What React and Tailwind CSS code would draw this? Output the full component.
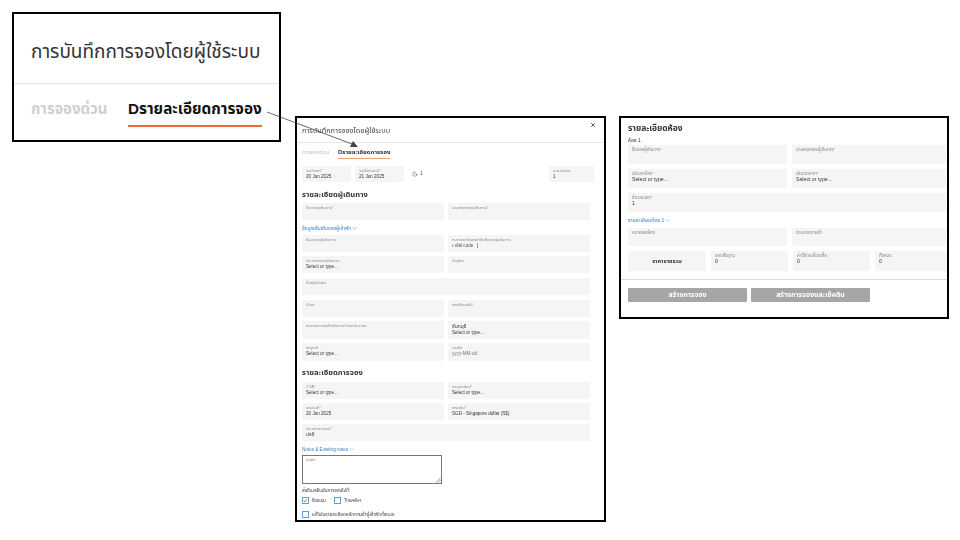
import React from 'react';
import { ChevronDown, Moon, X } from 'lucide-react';

const THAI = "font-['Liberation_Sans','Noto_Sans_Thai','Noto_Sans','DejaVu_Sans',sans-serif]";

function Field({ label, value, h = 'h-[17px]', className = '', dark = true, big = false }) {
  return (
    <div className={`${h} rounded-[1px] bg-[#f5f5f5] pl-[4px] pt-[2px] ${className}`}>
      <div className={`${big ? 'text-[4.3px]' : 'text-[4px]'} leading-[5px] text-[#8a8a8a]`}>{label}</div>
      {value && <div className={`${big ? 'text-[5.2px]' : 'text-[4.6px]'} leading-[7px] ${dark ? 'text-[#333]' : 'text-[#777]'}`}>{value}</div>}
    </div>
  );
}

function LinkRow({ children, className = '' }) {
  return (
    <div className={`flex items-center leading-[7px] text-[#3b7fc4] ${className}`}>
      {children}
      <ChevronDown size={7} strokeWidth={1.5} />
    </div>
  );
}

function Box({ checked }) {
  return (
    <span className="grid h-[7px] w-[7px] place-items-center border border-[#6f97c9] bg-white">
      {checked && (
        <svg width="5" height="5" viewBox="0 0 5 5" fill="none" stroke="#3b7fc4" strokeWidth="0.8">
          <path d="M1 2.8 2 4 4 1" />
        </svg>
      )}
    </span>
  );
}

function Callout() {
  return (
    <div className="absolute left-[12px] top-[12px] h-[130px] w-[269px] border-2 border-black bg-white">
      <div className="flex h-[70px] items-center border-b border-[#e2e2e2] pl-[17px] pt-[8px] text-[19px] text-[#333]">
        การบันทึกการจองโดยผู้ใช้ระบบ
      </div>
      <div className="flex items-start pl-[17px] pt-[16px]">
        <div className="w-[97px] text-[15px] font-bold leading-[18px] text-[#cfcfcf]">การจองด่วน</div>
        <div className="border-b-2 border-[#f0682a] pb-[7px] text-[15.3px] font-bold leading-[18px] text-[#111]">
          Dรายละเอียดการจอง
        </div>
      </div>
    </div>
  );
}

function BookingForm() {
  return (
    <div className="absolute left-[295px] top-[116px] h-[406px] w-[311px] overflow-hidden border-2 border-black bg-white blur-[0.3px]">
      <div className="flex h-[25px] items-center justify-between border-b border-[#e6e6e6] pl-[5px] pr-[8px]">
        <span className="pt-[2px] text-[7.3px] text-[#444]">การบันทึกการจองโดยผู้ใช้ระบบ</span>
        <X size={6} strokeWidth={3} className="mb-[10px] text-[#222]" />
      </div>
      <div className="flex items-start pl-[5px] pt-[5px]">
        <span className="w-[36px] text-[5.6px] leading-[8px] text-[#bbb]">การจองด่วน</span>
        <span className="border-b border-[#f0a07a] pb-[2px] text-[6px] font-bold leading-[8px] text-[#333]">Dรายละเอียดการจอง</span>
      </div>
      <div className="mt-[7px] flex items-center pl-[5px] pr-[10px]">
        <Field h="h-[16px] w-[49px]" label="วันเข้าพัก*" value="20 Jun 2025" />
        <Field h="h-[16px] w-[49px]" className="ml-[4px]" label="วันที่เช็คเอาท์*" value="21 Jun 2025" />
        <Moon size={6} className="ml-[8px] text-[#555]" />
        <span className="ml-[2px] text-[4.6px] text-[#444]">1</span>
        <Field h="h-[16px] w-[45px]" className="ml-auto" label="จำนวนห้อง" value="1" />
      </div>

      <div className="px-[5px]">
        <h2 className="mt-[7px] text-[7.6px] font-bold leading-[12px] text-[#333]">รายละเอียดผู้เดินทาง</h2>
        <div className="mt-[2px] grid w-[288px] grid-cols-2 gap-x-[4px]">
          <Field label="ชื่อของผู้เดินทาง*" />
          <Field label="นามสกุลของผู้เดินทาง*" />
        </div>
        <LinkRow className="mt-[5px] text-[4.8px]">ข้อมูลเพิ่มเติมของผู้เข้าพัก</LinkRow>
        <div className="mt-[3px] grid w-[288px] grid-cols-2 gap-x-[4px] gap-y-[4px]">
          <Field label="อีเมลของผู้เดินทาง" />
          <Field label="หมายเลขโทรศัพท์มือถือของผู้เดินทาง" value={<span className="text-[#555]">▪ dial code <span className="ml-[2px] border-l border-[#999]">&nbsp;</span></span>} />
          <Field label="ประเทศของผู้เดินทาง" value="Select or type..." />
          <Field label="ที่อยู่ถัง" />
          <Field className="col-span-2 mt-[1px]" label="ที่อยู่ผู้เข้าพัก" />
          <Field className="mt-[1px]" label="เมือง" />
          <Field className="mt-[1px]" label="รหัสไปรษณีย์" />
          <Field h="h-[18px]" label="หมายเลขหนังสือเดินทาง/บัตรประชาชน" />
          <Field h="h-[18px]" label={<span className="text-[5px] leading-[6px] text-[#333]">จันทบุรี</span>} value="Select or type..." />
          <Field h="h-[18px]" label="สัญชาติ" value="Select or type..." />
          <Field h="h-[18px]" label="วันเกิด" value="yyyy-MM-dd" dark={false} />
        </div>

        <h2 className="mt-[6px] text-[7.6px] font-bold leading-[12px] text-[#333]">รายละเอียดการจอง</h2>
        <div className="mt-[3px] grid w-[288px] grid-cols-2 gap-x-[4px] gap-y-[4px]">
          <Field label="OTA*" value="Select or type..." />
          <Field label="ประเภทห้อง*" value="Select or type..." />
          <Field label="จองวันที่*" value="20 Jun 2025" />
          <Field label="สกุลเงิน*" value="SGD - Singapore dollar (S$)" />
          <Field className="col-span-2" label="ประเภทการจอง*" value="ปกติ" />
        </div>
        <LinkRow className="mt-[5px] text-[4.6px]">Notes &amp; Existing notes</LinkRow>
        <div className="relative mt-[2px] h-[29px] w-[140px] border border-[#777] pl-[3px] pt-[1px] text-[4px] text-[#777]">
          บันทึก
          <svg className="absolute bottom-0 right-0" width="6" height="6" viewBox="0 0 6 6" fill="none" stroke="#555" strokeWidth="0.6">
            <path d="M1 5.5 5.5 1M3.2 5.5 5.5 3.2" />
          </svg>
        </div>
        <div className="mt-[3px] text-[4.6px] leading-[7px] text-[#444]">ส่งอีเมลยืนยันการจองไปที่:</div>
        <div className="mt-[3px] flex items-center gap-[3px] text-[4.6px] leading-[7px] text-[#444]">
          <Box checked />
          <span className="mr-[5px]">โรงแรม</span>
          <Box />
          <span>Traveller</span>
        </div>
        <div className="mt-[7px] flex items-center gap-[3px] text-[4.6px] leading-[7px] text-[#444]">
          <Box />
          <span>แก้ไขในรายละเอียดหลักการเข้าผู้เข้าพักทั้งหมด</span>
        </div>
      </div>
    </div>
  );
}

function RoomDetails() {
  return (
    <div className="absolute left-[619px] top-[116px] h-[203px] w-[330px] overflow-hidden border-2 border-black bg-white blur-[0.3px]">
      <div className="pl-[7px]">
        <h2 className="mt-[4px] text-[8.4px] font-bold leading-[12px] text-[#333]">รายละเอียดห้อง</h2>
        <div className="mt-[3px] text-[5px] leading-[7px] text-[#333]">ห้อง 1</div>
        <div className="mt-[1px] grid w-[318px] grid-cols-[159px_154px] gap-x-[5px] gap-y-[5px]">
          <Field big h="h-[19px]" label="ชื่อของผู้เดินทาง*" />
          <Field big h="h-[19px]" label="นามสกุลของผู้เดินทาง*" />
          <Field big h="h-[19px]" label="ประเภทห้อง*" value="Select or type..." />
          <Field big h="h-[19px]" label="ประเภทราคา*" value="Select or type..." />
          <Field big h="h-[19px]" className="col-span-2" label="จำนวนแขก*" value="1" />
        </div>
        <LinkRow className="mt-[5px] text-[5.2px]">รายละเอียดห้อง 1</LinkRow>
        <div className="mt-[4px] grid w-[318px] grid-cols-[159px_154px] gap-x-[5px]">
          <Field big h="h-[18px]" label="หมายเลขห้อง" />
          <Field big h="h-[18px]" label="ร่วมเวลาการเข้า" />
        </div>
        <div className="mt-[5px] grid w-[318px] grid-cols-[78px_77px_77px_72px] gap-x-[5px]">
          <div className="grid h-[20px] place-items-center rounded-[1px] bg-[#f5f5f5] text-[5.5px] font-bold text-[#333]">ราคาขายรวม</div>
          <Field big h="h-[20px]" label="ยอดพื้นฐาน" value="0" />
          <Field big h="h-[20px]" label="ค่าใช้จ่ายเบ็ดเตล็ด" value="0" />
          <Field big h="h-[20px]" label="ทั้งหมด" value="0" />
        </div>
      </div>
      <div className="mt-[8px] flex gap-[4px] border-t border-[#ddd] pl-[7px] pt-[8px]">
        <div className="grid h-[14px] w-[119px] place-items-center rounded-[1px] bg-[#a6a6a6] text-[7px] font-bold text-white">สร้างการจอง</div>
        <div className="grid h-[14px] w-[119px] place-items-center rounded-[1px] bg-[#a6a6a6] text-[7px] font-bold text-white">สร้างการจองและเช็คอิน</div>
      </div>
    </div>
  );
}

export default function App() {
  return (
    <div className={`relative h-[540px] w-[960px] overflow-hidden bg-white ${THAI}`}>
      <Callout />
      <BookingForm />
      <RoomDetails />
      {/* arrow from the callout tab down to the tab in the form */}
      <svg className="absolute left-0 top-0" width="960" height="540" fill="none">
        <path d="M267 112 352 144" stroke="#444" strokeWidth="0.8" />
        <path d="M358 147 350 147 353 141Z" fill="#444" />
      </svg>
    </div>
  );
}
